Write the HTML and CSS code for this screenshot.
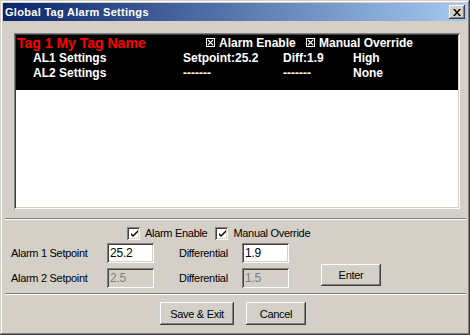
FILE: index.html
```html
<!DOCTYPE html>
<html lang="en">
<head>
  <meta charset="UTF-8" />
  <title>Global Tag Alarm Settings</title>
  <link rel="stylesheet" href="styles.css">
</head>
<body>
  <div class="window">
    <div class="title-bar">
      <span class="title-text">Global Tag Alarm Settings</span>
      <button class="close-btn">
        <svg width="8" height="7" viewBox="0 0 8 7"><path d="M0 0h2l2 2.5 2-2.5h2l-3 3.5 3 3.5h-2l-2-2.5-2 2.5h-2l3-3.5z" fill="#000"/></svg>
      </button>
    </div>
    <div class="content">
      <div class="listbox">
        <div class="tag-panel">
          <div class="tag-row head">
            <span class="tag-name">Tag 1 My Tag Name</span>
            <span class="flag first">
              <svg class="xbox" width="9" height="9" viewBox="0 0 9 9"><rect x="0.5" y="0.5" width="8" height="8" fill="none" stroke="#fff"/><path d="M2 2l5 5M7 2l-5 5" stroke="#fff" stroke-width="1.1"/></svg>
              Alarm Enable
            </span>
            <span class="flag">
              <svg class="xbox" width="9" height="9" viewBox="0 0 9 9"><rect x="0.5" y="0.5" width="8" height="8" fill="none" stroke="#fff"/><path d="M2 2l5 5M7 2l-5 5" stroke="#fff" stroke-width="1.1"/></svg>
              Manual Override
            </span>
          </div>
          <div class="tag-row">
            <span class="col-name">AL1 Settings</span>
            <span class="col-set">Setpoint:25.2</span>
            <span class="col-diff">Diff:1.9</span>
            <span>High</span>
          </div>
          <div class="tag-row">
            <span class="col-name">AL2 Settings</span>
            <span class="col-set">-------</span>
            <span class="col-diff">-------</span>
            <span>None</span>
          </div>
        </div>
      </div>

      <div class="separator"></div>

      <div class="checks">
        <label class="check"><span class="box"><svg width="9" height="9" viewBox="0 0 9 9"><path d="M1 4l2 2 5-5v2l-5 5-2-2z" fill="#000"/></svg></span>Alarm Enable</label>
        <label class="check"><span class="box"><svg width="9" height="9" viewBox="0 0 9 9"><path d="M1 4l2 2 5-5v2l-5 5-2-2z" fill="#000"/></svg></span>Manual Override</label>
      </div>

      <div class="form-row first">
        <span class="lbl">Alarm 1 Setpoint</span>
        <span class="field">25.2</span>
        <span class="lbl-diff">Differential</span>
        <span class="field">1.9</span>
      </div>
      <div class="form-row">
        <span class="lbl">Alarm 2 Setpoint</span>
        <span class="field disabled">2.5</span>
        <span class="lbl-diff">Differential</span>
        <span class="field disabled">1.5</span>
        <button class="btn enter-btn">Enter</button>
      </div>

      <div class="separator lower"></div>

      <div class="actions">
        <button class="btn save-btn">Save &amp; Exit</button>
        <button class="btn cancel-btn">Cancel</button>
      </div>
    </div>
  </div>
</body>
</html>
```

FILE: styles.css
```css
body {
  margin: 0;
  padding: 0;
  background: #d4d0c8;
  font-family: 'Liberation Sans', Arial, sans-serif;
  font-size: 11px;
  letter-spacing: -0.3px;
}
.window {
  width: 470px;
  height: 335px;
  box-sizing: border-box;
  background: #d4d0c8;
  padding: 3px;
  box-shadow: inset -1px -1px 0 #404040, inset 1px 1px 0 #d4d0c8, inset -2px -2px 0 #808080, inset 2px 2px 0 #fff;
  display: flex;
  flex-direction: column;
}
.title-bar {
  height: 18px;
  background: linear-gradient(90deg, #0a246a 0%, #a6caf0 100%);
  display: flex;
  align-items: center;
  justify-content: space-between;
  padding: 0 2px 0 2px;
}
.title-text {
  color: #fff;
  font-weight: bold;
  font-size: 11px;
  letter-spacing: 0.3px;
}
.close-btn {
  width: 16px;
  height: 14px;
  padding: 0;
  border: none;
  background: #d4d0c8;
  box-shadow: inset -1px -1px 0 #404040, inset 1px 1px 0 #fff, inset -2px -2px 0 #808080;
  display: flex;
  align-items: center;
  justify-content: center;
}
.content {
  display: flex;
  flex-direction: column;
  flex: 1;
}
.listbox {
  margin: 12px 7px 0 11px;
  height: 176px;
  box-sizing: border-box;
  padding: 2px;
  background: #fff;
  box-shadow: inset 1px 1px 0 #808080, inset -1px -1px 0 #fff, inset 2px 2px 0 #404040, inset -2px -2px 0 #d4d0c8;
}
.tag-panel {
  background: #000;
  height: 55px;
  color: #fff;
  font-weight: bold;
  font-size: 12px;
  letter-spacing: 0;
  white-space: nowrap;
}
.tag-row {
  display: flex;
  height: 15px;
  align-items: center;
  padding-left: 17px;
}
.tag-row.head {
  padding-left: 1px;
}
.tag-name {
  color: #ff0000;
  font-size: 14px;
  width: 189px;
}
.flag {
  display: flex;
  align-items: center;
  gap: 4px;
}
.flag.first { width: 100px; }
.xbox { flex-shrink: 0; }
.col-name { width: 150px; }
.col-set { width: 100px; }
.col-diff { width: 70px; }
.separator {
  margin: 9px 1px 0 2px;
  height: 0;
  border-top: 1px solid #808080;
  border-bottom: 1px solid #fff;
}
.separator.lower {
  margin-top: 5px;
}
.checks {
  display: flex;
  gap: 8px;
  padding-left: 124px;
  margin-top: 6px;
  height: 14px;
}
.check {
  display: flex;
  align-items: center;
  gap: 5px;
}
.box {
  width: 13px;
  height: 13px;
  box-sizing: border-box;
  background: #fff;
  box-shadow: inset 1px 1px 0 #808080, inset -1px -1px 0 #fff, inset 2px 2px 0 #404040, inset -2px -2px 0 #d4d0c8;
  display: flex;
  align-items: center;
  justify-content: center;
  padding: 1px 0 0 1px;
}
.form-row {
  display: flex;
  align-items: center;
  padding-left: 8px;
  margin-top: 5px;
  height: 20px;
}
.form-row.first {
  margin-top: 3px;
}
.lbl { width: 96px; }
.lbl-diff {
  width: 63px;
  margin-left: 25px;
}
.field {
  width: 47px;
  height: 20px;
  box-sizing: border-box;
  background: #fff;
  padding: 3px 3px 0 3px;
  font-size: 12px;
  letter-spacing: -0.2px;
  box-shadow: inset 1px 1px 0 #808080, inset -1px -1px 0 #fff, inset 2px 2px 0 #404040, inset -2px -2px 0 #d4d0c8;
}
.field.disabled {
  background: #d4d0c8;
  color: #808080;
}
.btn {
  font-family: 'Liberation Sans', Arial, sans-serif;
  font-size: 11px;
  letter-spacing: -0.3px;
  color: #000;
  border: none;
  padding: 0;
  background: #d4d0c8;
  box-shadow: inset -1px -1px 0 #404040, inset 1px 1px 0 #fff, inset -2px -2px 0 #808080;
}
.enter-btn {
  width: 60px;
  height: 22px;
  margin-left: 32px;
  margin-top: -7px;
}
.actions {
  display: flex;
  justify-content: center;
  gap: 12px;
  margin-top: 7px;
  padding-right: 4px;
}
.save-btn { width: 74px; height: 23px; }
.cancel-btn { width: 60px; height: 23px; }
```
